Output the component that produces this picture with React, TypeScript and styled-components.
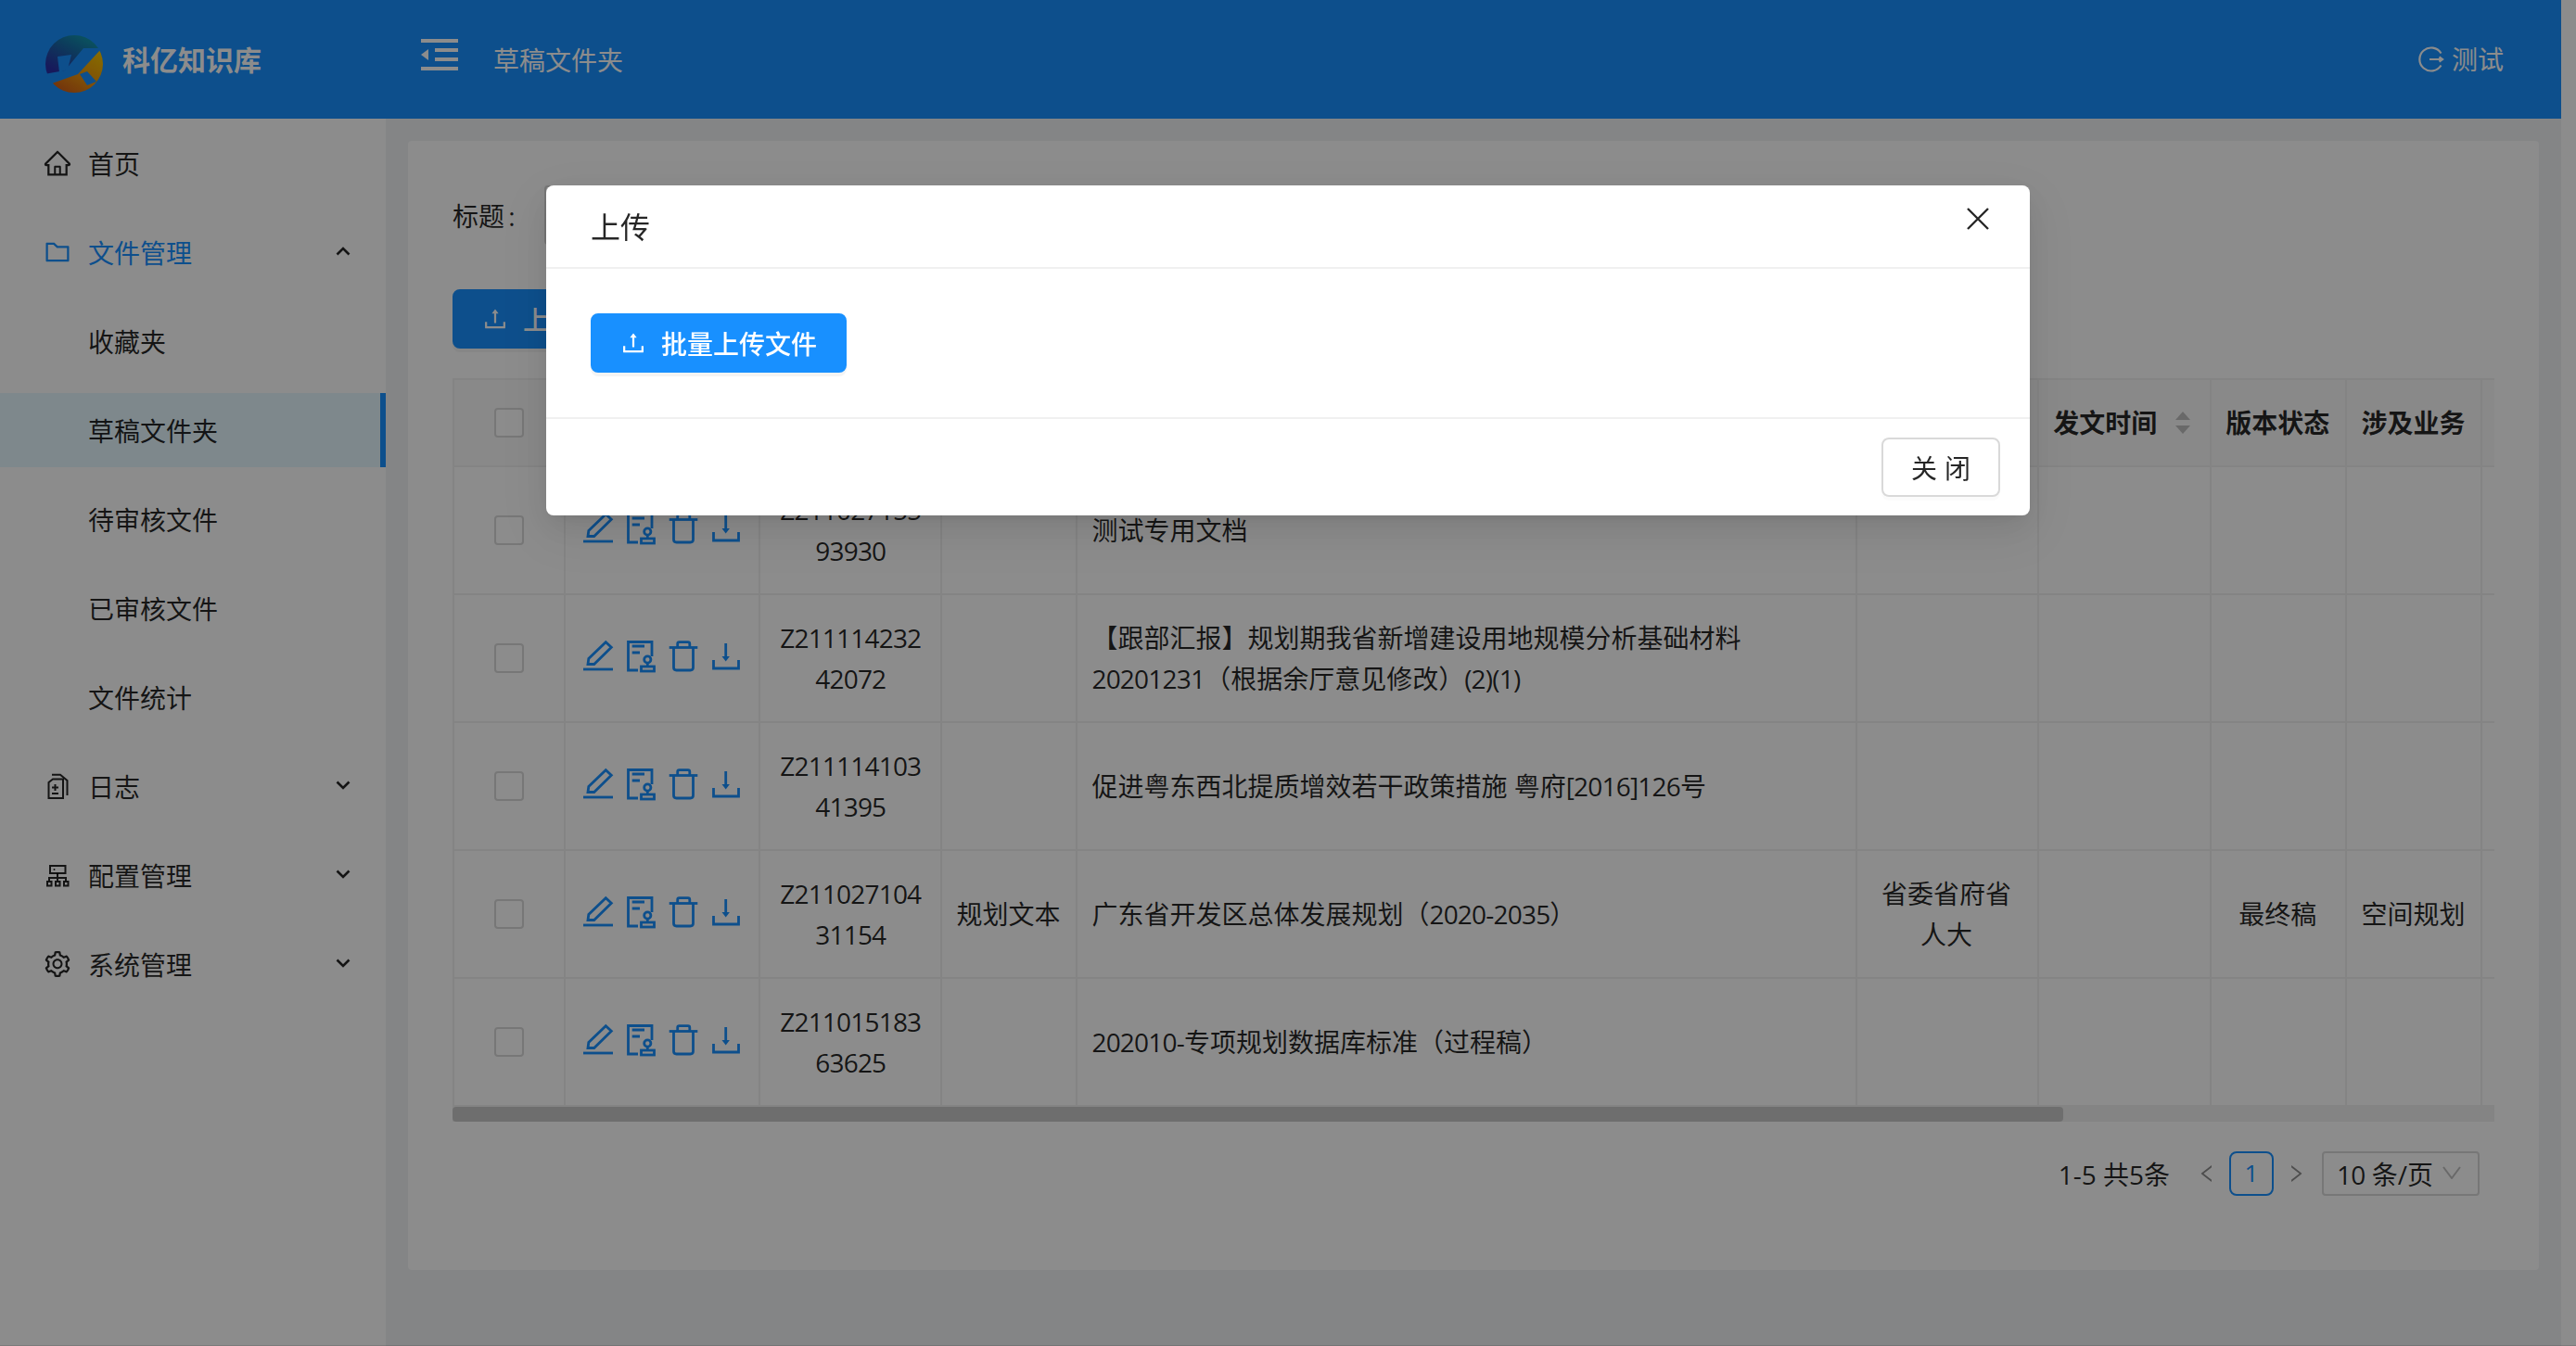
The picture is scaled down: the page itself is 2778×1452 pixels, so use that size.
import * as React from "react";
import styled, { createGlobalStyle } from "styled-components";
import {
  AiOutlineHome,
  AiOutlineFolder,
  AiOutlineSetting,
  AiOutlineUpload,
  AiOutlineLeft,
  AiOutlineRight,
} from "react-icons/ai";

const FONT = `"Open Sans", "Noto Sans CJK SC", sans-serif`;

const GlobalStyle = createGlobalStyle`
  html, body {
    margin: 0;
    height: 100%;
    background: #fff;
    overflow: hidden;
    font-family: ${FONT};
  }
  * {
    box-sizing: border-box;
  }
`;

interface RowData {
  id: [string, string];
  kind?: string;
  title: React.ReactNode;
  office?: React.ReactNode;
  status?: string;
  business?: string;
}

const Num = styled.span`
  letter-spacing: -0.8px;
`;

const rows: RowData[] = [
  { id: ["Z211027155", "93930"], title: "测试专用文档" },
  {
    id: ["Z211114232", "42072"],
    title: (
      <>
        【跟部汇报】规划期我省新增建设用地规模分析基础材料
        <br />
        <Num>20201231</Num>（根据余厅意见修改）<Num>(2)(1)</Num>
      </>
    ),
  },
  {
    id: ["Z211114103", "41395"],
    title: (
      <>
        促进粤东西北提质增效若干政策措施 粤府<Num>[2016]126</Num>号
      </>
    ),
  },
  {
    id: ["Z211027104", "31154"],
    kind: "规划文本",
    title: (
      <>
        广东省开发区总体发展规划（<Num>2020-2035</Num>）
      </>
    ),
    office: (
      <>
        省委省府省
        <br />
        人大
      </>
    ),
    status: "最终稿",
    business: "空间规划",
  },
  {
    id: ["Z211015183", "63625"],
    title: (
      <>
        <Num>202010-</Num>专项规划数据库标准（过程稿）
      </>
    ),
  },
];

const colWidths = [120, 210, 196, 146, 840, 196, 186, 146, 146, 604];

const Chevron: React.FC<{ open?: boolean }> = ({ open }) => (
  <ChevronSvg viewBox="0 0 16 10" fill="none" stroke="currentColor" strokeWidth="2.6">
    <path d={open ? "M1.5 8.5 8 2l6.5 6.5" : "M1.5 1.5 8 8l6.5-6.5"} />
  </ChevronSvg>
);

const LogIcon = () => (
  <MenuSvg viewBox="0 0 28 28" fill="none" stroke="currentColor" strokeWidth="2">
    <path d="M4.5 10 9 6.5h11V27H4.500z" />
    <path d="M8 1.800h9l7.500 6.200V24" />
    <path d="M8 15.500h7M11.500 12v7M8 22h7" />
  </MenuSvg>
);

const ConfigIcon = () => (
  <MenuSvg viewBox="0 0 28 28" fill="none" stroke="currentColor" strokeWidth="2">
    <rect x="6" y="4" width="16.500" height="8" />
    <path d="M14 12v5M5 20v-3h18v3M14 17v3" />
    <rect x="3" y="21" width="4.500" height="4.500" />
    <rect x="12" y="21" width="4.500" height="4.500" />
    <rect x="21" y="21" width="4.500" height="4.500" />
    <circle cx="10.500" cy="8" r="1" fill="currentColor" stroke="none" />
  </MenuSvg>
);

const FoldIcon = () => (
  <FoldSvg width="40" height="34" viewBox="0 0 40 34" fill="currentColor">
    <rect x="0" y="0" width="40" height="4" />
    <rect x="15" y="10" width="25" height="4" />
    <rect x="15" y="20" width="25" height="4" />
    <rect x="0" y="30" width="40" height="4" />
    <path d="M8 11v12l-8-6z" />
  </FoldSvg>
);

const LogoutIcon = () => (
  <svg width="28" height="28" viewBox="0 0 28 28" fill="none" stroke="currentColor" strokeWidth="2.200">
    <path d="M24.500 7.500A12.500 12.500 0 1 0 24.500 20.500" />
    <path d="M12 14h14M22.500 11.500l3.500 2.500-3.500 2.500" />
  </svg>
);

const Logo = () => (
  <LogoSvg width="80" height="80" viewBox="0 0 80 80">
    <defs>
      <linearGradient id="logoTop" x1="0.8" y1="0" x2="0.1" y2="0.8">
        <stop offset="0" stopColor="#0fb5b0" />
        <stop offset="0.5" stopColor="#1770a8" />
        <stop offset="1" stopColor="#2a2fa6" />
      </linearGradient>
      <linearGradient id="logoBottom" x1="0.9" y1="0.1" x2="0.2" y2="0.9">
        <stop offset="0" stopColor="#f5c400" />
        <stop offset="0.5" stopColor="#e8900f" />
        <stop offset="1" stopColor="#c8481a" />
      </linearGradient>
      <clipPath id="logoClip">
        <circle cx="40" cy="39" r="31" />
      </clipPath>
    </defs>
    <g clipPath="url(#logoClip)">
      <path d="M0 0h80L66 22 50 22 30 46 8 50 0 50z" fill="url(#logoTop)" />
      <path d="M68 24 80 24V80H0V64L16 60 44 50z" fill="url(#logoBottom)" />
      <path d="M22 31 37 29 33 45 24 48z" fill="#1890ff" />
      <path d="M46 50 54 47 64 58 54 62z" fill="#1890ff" />
    </g>
  </LogoSvg>
);

const PencilIcon = () => (
  <ActionSvg viewBox="0 0 36 36">
    <path d="M6 26.500 6.800 20.500 25.300 2.700 31.300 8.300 12.700 26.500z" />
    <path d="M1 32h32" />
  </ActionSvg>
);

const StampIcon = () => (
  <ActionSvg viewBox="0 0 36 36">
    <path d="M14 33H3.500V2.500H29V18" />
    <path d="M7.700 7H21M7.700 14H16" />
    <circle cx="24.300" cy="21.500" r="3.600" />
    <path d="M24.300 25v4" />
    <rect x="17.500" y="29" width="14" height="5" />
  </ActionSvg>
);

const TrashIcon = () => (
  <ActionSvg viewBox="0 0 36 36">
    <path d="M1.700 8.500h30.600" />
    <path d="M10.700 8V4.500q0-1.800 1.800-1.800h9.500q1.800 0 1.800 1.800V8" />
    <path d="M6.500 8.500V30q0 3 3 3h15q3 0 3-3V8.500" />
  </ActionSvg>
);

const DownloadIcon = () => (
  <ActionSvg viewBox="0 0 36 36">
    <path d="M16.700 4v17" />
    <path d="M12.500 18h8.400l-4.200 5.500z" fill="currentColor" stroke="none" />
    <path d="M3.500 22v9h27v-9" />
  </ActionSvg>
);

const Checkbox = styled.span`
  display: block;
  width: 32px;
  height: 32px;
  margin: 0 auto;
  border: 2px solid #d9d9d9;
  border-radius: 4px;
  background: #fff;
`;

const App: React.FC = () => {
  return (
    <>
      <GlobalStyle />
      <Page>
        <Header>
          <Brand>
            <Logo />
            <BrandName>科亿知识库</BrandName>
          </Brand>
          <FoldIcon />
          <Crumb>草稿文件夹</Crumb>
          <User>
            <LogoutIcon />
            <span>测试</span>
          </User>
        </Header>
        <Body>
          <Sidebar>
            <MenuItem>
              <MenuIconBox>
                <AiOutlineHome size={32} />
              </MenuIconBox>
              首页
            </MenuItem>
            <MenuItem $open>
              <MenuIconBox>
                <AiOutlineFolder size={32} />
              </MenuIconBox>
              文件管理
              <Chevron open />
            </MenuItem>
            <SubItem>收藏夹</SubItem>
            <SubItem $active>草稿文件夹</SubItem>
            <SubItem>待审核文件</SubItem>
            <SubItem>已审核文件</SubItem>
            <SubItem>文件统计</SubItem>
            <MenuItem>
              <MenuIconBox>
                <LogIcon />
              </MenuIconBox>
              日志
              <Chevron />
            </MenuItem>
            <MenuItem>
              <MenuIconBox>
                <ConfigIcon />
              </MenuIconBox>
              配置管理
              <Chevron />
            </MenuItem>
            <MenuItem>
              <MenuIconBox>
                <AiOutlineSetting size={32} />
              </MenuIconBox>
              系统管理
              <Chevron />
            </MenuItem>
          </Sidebar>
          <Main>
            <Card>
              <FilterRow>
                <FilterLabel>标题 :</FilterLabel>
                <FilterInput />
              </FilterRow>
              <PrimaryButton>
                <AiOutlineUpload size={30} />
                上传
              </PrimaryButton>
              <TableScroll>
                <Table>
                  <colgroup>
                    {colWidths.map((w, i) => (
                      <col key={i} style={{ width: w }} />
                    ))}
                  </colgroup>
                  <thead>
                    <tr>
                      <CheckTh>
                        <Checkbox />
                      </CheckTh>
                      <Th>操作</Th>
                      <Th>编号</Th>
                      <Th>类型</Th>
                      <Th>标题</Th>
                      <Th>发文机关</Th>
                      <Th $left>
                        <SortHead>
                          发文时间
                          <SortCarets>
                            <i />
                            <i />
                          </SortCarets>
                        </SortHead>
                      </Th>
                      <Th>版本状态</Th>
                      <Th>涉及业务</Th>
                      <Th />
                    </tr>
                  </thead>
                  <tbody>
                    {rows.map((row) => (
                      <tr key={row.id[0]}>
                        <PlainCell>
                          <Checkbox />
                        </PlainCell>
                        <PlainCell>
                          <Actions>
                            <PencilIcon />
                            <StampIcon />
                            <TrashIcon />
                            <DownloadIcon />
                          </Actions>
                        </PlainCell>
                        <IdCell>
                          {row.id[0]}
                          <br />
                          {row.id[1]}
                        </IdCell>
                        <Td>{row.kind}</Td>
                        <Td $left>{row.title}</Td>
                        <Td>{row.office}</Td>
                        <Td />
                        <Td>{row.status}</Td>
                        <Td>{row.business}</Td>
                        <Td />
                      </tr>
                    ))}
                  </tbody>
                </Table>
              </TableScroll>
              <ScrollTrack>
                <ScrollThumb />
              </ScrollTrack>
              <Pagination>
                <PageTotal>1-5 共5条</PageTotal>
                <PageArrow>
                  <AiOutlineLeft size={24} />
                </PageArrow>
                <PageCurrent>1</PageCurrent>
                <PageArrow>
                  <AiOutlineRight size={24} />
                </PageArrow>
                <PageSize>
                  <span>
                    <Num>10</Num> 条/页
                  </span>
                  <PageSizeArrow viewBox="0 0 20 14" fill="none" stroke="currentColor" strokeWidth="2">
                    <path d="M1 1l9 12 9-12" />
                  </PageSizeArrow>
                </PageSize>
              </Pagination>
            </Card>
          </Main>
        </Body>
      </Page>
      <Mask />
      <Modal>
        <ModalHeader>
          上传
          <ModalClose viewBox="0 0 24 24" fill="none" stroke="currentColor" strokeWidth="2.400">
            <path d="M1 1l22 22M23 1 1 23" />
          </ModalClose>
        </ModalHeader>
        <ModalBody>
          <BatchButton>
            <AiOutlineUpload size={30} />
            批量上传文件
          </BatchButton>
        </ModalBody>
        <ModalFooter>
          <CloseButton>关闭</CloseButton>
        </ModalFooter>
      </Modal>
    </>
  );
};

export default App;

const Page = styled.div`
  display: flex;
  flex-direction: column;
  width: calc(100vw - 16px);
  height: 100vh;
  overflow: hidden;
`;

// Header

const Header = styled.header`
  flex: none;
  display: flex;
  align-items: center;
  height: 128px;
  padding-right: 62px;
  background: #1890ff;
  color: #fff;
`;

const Brand = styled.div`
  display: flex;
  align-items: center;
  width: 454px;
  padding-left: 40px;
`;

const LogoSvg = styled.svg`
  flex: none;
  margin-top: 12px;
`;

const BrandName = styled.span`
  margin-left: 12px;
  padding-top: 2px;
  font-size: 30px;
  font-weight: 700;
  line-height: 40px;
`;

const FoldSvg = styled.svg`
  flex: none;
  margin-top: -10px;
`;

const Crumb = styled.span`
  margin-left: 38px;
  padding-top: 2px;
  font-size: 28px;
  line-height: 40px;
`;

const User = styled.div`
  display: flex;
  align-items: center;
  gap: 8px;
  margin-left: auto;
  font-size: 28px;
  line-height: 40px;
`;

// Sidebar

const Body = styled.div`
  flex: 1;
  display: flex;
  min-height: 0;
  background: #f0f2f5;
`;

const Sidebar = styled.nav`
  flex: none;
  width: 416px;
  padding-top: 8px;
  background: #fff;
`;

const MenuItem = styled.div<{ $open?: boolean }>`
  display: flex;
  align-items: center;
  height: 80px;
  margin-bottom: 16px;
  padding: 0 38px 0 48px;
  font-size: 28px;
  color: ${(p) => (p.$open ? "#1890ff" : "rgba(0, 0, 0, 0.85)")};
`;

const MenuIconBox = styled.span`
  display: flex;
  flex: none;
  align-items: center;
  justify-content: center;
  width: 28px;
  height: 28px;
  margin-right: 19px;

  svg {
    flex: none;
  }
`;

const MenuSvg = styled.svg`
  width: 28px;
  height: 28px;
`;

const ChevronSvg = styled.svg`
  flex: none;
  width: 16px;
  height: 10px;
  margin-top: -2px;
  margin-left: auto;
  color: rgba(0, 0, 0, 0.85);
`;

const SubItem = styled.div<{ $active?: boolean }>`
  height: 80px;
  margin-bottom: 16px;
  padding-left: 95px;
  font-size: 28px;
  line-height: 82px;
  color: rgba(0, 0, 0, 0.85);
  background: ${(p) => (p.$active ? "#e6f7ff" : "transparent")};
  border-right: ${(p) => (p.$active ? "6px solid #1890ff" : "none")};
`;

// Card

const Main = styled.main`
  flex: 1;
  min-width: 0;
  padding: 24px;
`;

const Card = styled.section`
  padding: 48px;
  background: #fff;
  border-radius: 4px;
`;

const FilterRow = styled.div`
  display: flex;
  align-items: center;
  height: 64px;
  margin-bottom: 48px;
`;

const FilterLabel = styled.label`
  width: 99px;
  font-size: 28px;
  word-spacing: -3px;
  color: rgba(0, 0, 0, 0.85);
`;

const FilterInput = styled.div`
  width: 500px;
  height: 64px;
  border: 2px solid #d9d9d9;
  border-radius: 4px;
`;

const PrimaryButton = styled.button`
  display: flex;
  align-items: center;
  gap: 15px;
  height: 64px;
  margin-bottom: 32px;
  padding: 0 30px;
  border: 2px solid #1890ff;
  border-radius: 8px;
  background: #1890ff;
  color: #fff;
  font-family: ${FONT};
  font-size: 28px;
  font-weight: 500;
  box-shadow: 0 4px 0 rgba(0, 0, 0, 0.045);

  svg {
    flex: none;
    margin-left: -1px;
  }
`;

// Table

const TableScroll = styled.div`
  overflow: hidden;
  border-top: 2px solid #f0f0f0;
  border-left: 2px solid #f0f0f0;
`;

const Table = styled.table`
  width: 2792px;
  table-layout: fixed;
  border-collapse: separate;
  border-spacing: 0;
  font-size: 28px;
  line-height: 44px;
  color: rgba(0, 0, 0, 0.85);
`;

const Th = styled.th<{ $left?: boolean }>`
  height: 94px;
  padding: 0 17px 0 15px;
  background: #fafafa;
  border-right: 2px solid #f0f0f0;
  border-bottom: 2px solid #f0f0f0;
  font-weight: 700;
  text-align: ${(p) => (p.$left ? "left" : "center")};
  white-space: nowrap;
`;

const CheckTh = styled(Th)`
  padding: 0 16px;
`;

const Td = styled.td<{ $left?: boolean }>`
  height: 138px;
  padding: 0 17px 0 15px;
  border-right: 2px solid #f0f0f0;
  border-bottom: 2px solid #f0f0f0;
  text-align: ${(p) => (p.$left ? "left" : "center")};
`;

const PlainCell = styled(Td)`
  padding: 0 16px;
`;

const IdCell = styled(Td)`
  padding: 0 16px;
  letter-spacing: -0.8px;
`;

const SortHead = styled.span`
  display: flex;
  align-items: center;
  justify-content: space-between;
  padding-right: 4px;
`;

const SortCarets = styled.span`
  display: flex;
  flex-direction: column;
  gap: 6px;

  i {
    display: block;
    width: 0;
    height: 0;
    border-left: 8px solid transparent;
    border-right: 8px solid transparent;
    border-bottom: 9px solid #bfbfbf;
  }
  i:last-child {
    border-bottom: none;
    border-top: 9px solid #bfbfbf;
  }
`;

const Actions = styled.div`
  display: flex;
  justify-content: center;
  gap: 10px;
  margin: -4px -4px 0 -2px;
`;

const ActionSvg = styled.svg`
  flex: none;
  width: 36px;
  height: 36px;
  color: #1890ff;
  fill: none;
  stroke: currentColor;
  stroke-width: 2.8;
`;

const ScrollTrack = styled.div`
  height: 16px;
  background: #f1f1f1;
`;

const ScrollThumb = styled.div`
  width: 1737px;
  height: 16px;
  background: #c9c9c9;
  border-radius: 4px;
`;

// Pagination

const Pagination = styled.div`
  display: flex;
  align-items: center;
  justify-content: flex-end;
  height: 48px;
  margin-top: 32px;
  margin-bottom: 32px;
  padding-right: 16px;
  font-size: 28px;
  color: rgba(0, 0, 0, 0.85);
`;

const PageTotal = styled.span`
  margin-right: 16px;
  white-space: nowrap;
`;

const PageArrow = styled.span`
  display: flex;
  align-items: center;
  justify-content: center;
  width: 48px;
  height: 48px;
  color: rgba(0, 0, 0, 0.45);
`;

const PageCurrent = styled.span`
  width: 48px;
  height: 48px;
  border: 2px solid #1890ff;
  border-radius: 8px;
  color: #1890ff;
  font-size: 26px;
  line-height: 42px;
  text-align: center;
`;

const PageSize = styled.div`
  display: flex;
  align-items: center;
  justify-content: space-between;
  width: 170px;
  height: 48px;
  margin-left: 4px;
  padding: 0 18px 0 14px;
  border: 2px solid #d9d9d9;
  border-radius: 4px;
  white-space: nowrap;
`;

const PageSizeArrow = styled.svg`
  flex: none;
  width: 20px;
  height: 14px;
  margin-top: -2px;
  color: rgba(0, 0, 0, 0.25);
`;

// Modal

const Mask = styled.div`
  position: fixed;
  inset: 0;
  background: rgba(0, 0, 0, 0.45);
  box-shadow: inset 0 -1px 0 rgba(0, 0, 0, 0.12);
`;

const Modal = styled.div`
  position: fixed;
  top: 200px;
  left: 589px;
  width: 1600px;
  background: #fff;
  border-radius: 8px;
  box-shadow: 0 6px 12px -8px rgba(0, 0, 0, 0.12), 0 12px 32px 0 rgba(0, 0, 0, 0.08),
    0 18px 56px 16px rgba(0, 0, 0, 0.05);
`;

const ModalHeader = styled.div`
  position: relative;
  height: 90px;
  padding: 0 48px;
  border-bottom: 2px solid #f0f0f0;
  font-size: 32px;
  line-height: 90px;
  color: rgba(0, 0, 0, 0.85);
`;

const ModalClose = styled.svg`
  position: absolute;
  top: 24px;
  right: 44px;
  width: 24px;
  height: 24px;
  color: rgba(0, 0, 0, 0.85);
`;

const ModalBody = styled.div`
  padding: 48px;
`;

const BatchButton = styled(PrimaryButton)`
  margin-bottom: 0;
`;

const ModalFooter = styled.div`
  display: flex;
  justify-content: flex-end;
  padding: 20px 32px;
  border-top: 2px solid #f0f0f0;
`;

const CloseButton = styled.button`
  width: 128px;
  height: 64px;
  border: 2px solid #d9d9d9;
  border-radius: 8px;
  background: #fff;
  color: rgba(0, 0, 0, 0.85);
  font-family: ${FONT};
  font-size: 28px;
  letter-spacing: 8px;
  text-indent: 8px;
  box-shadow: 0 4px 0 rgba(0, 0, 0, 0.015);
`;
